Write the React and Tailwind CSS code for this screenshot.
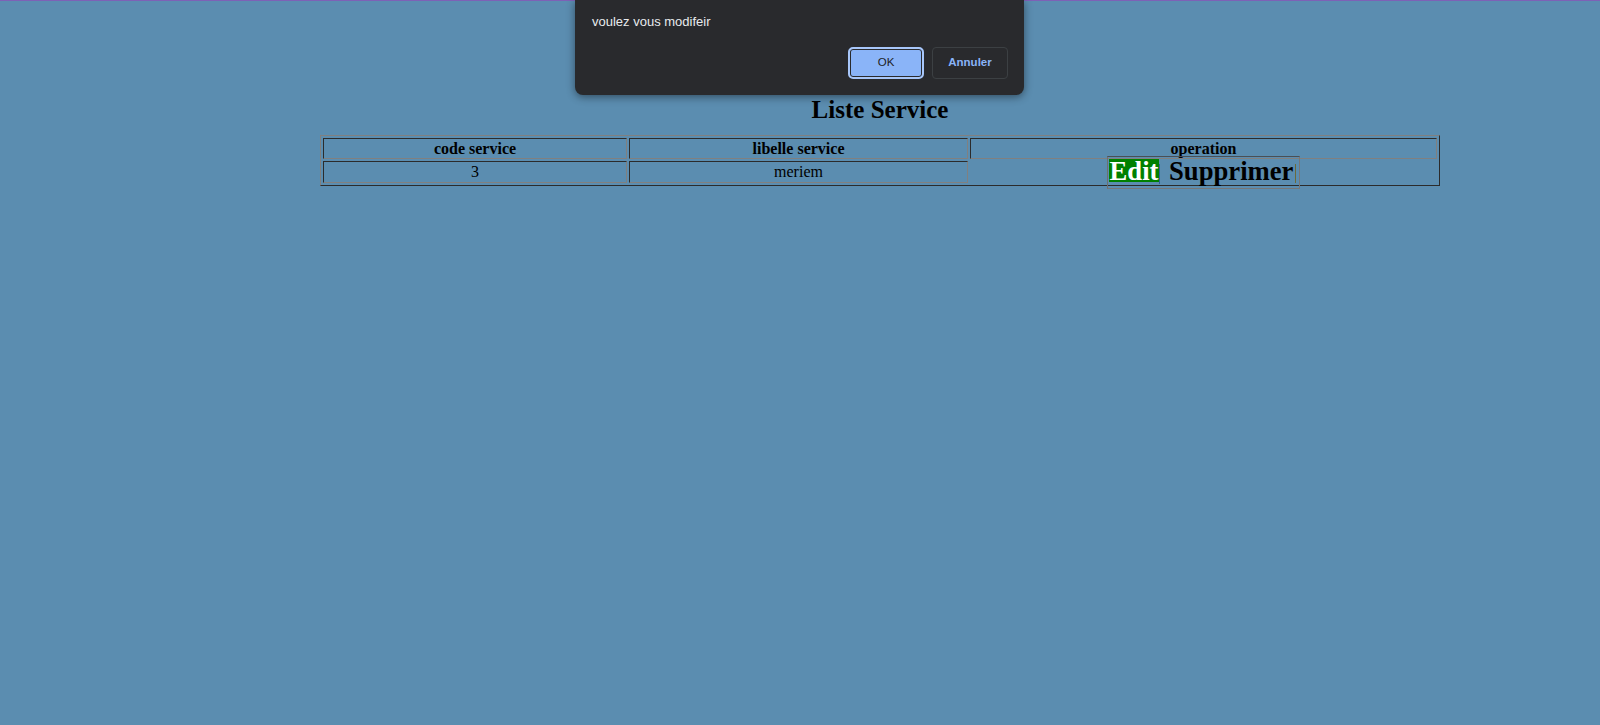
import React from 'react';

const headCell =
  "flex items-center justify-center border border-t-[#2b2b2b] border-l-[#2b2b2b] border-r-[#808080] border-b-[#808080] font-bold text-[16px] leading-none";
const dataCell =
  "flex items-center justify-center border border-t-[#2b2b2b] border-l-[#2b2b2b] border-r-[#808080] border-b-[#808080] text-[16px] leading-none";

const ConfirmDialog = () => (
  <div className="absolute left-[575px] top-0 w-[449px] h-[95px] bg-[#292a2d] rounded-b-[8px] shadow-[0_2px_8px_rgba(0,0,0,0.45)] font-['Liberation_Sans',Arial,sans-serif]">
    <p className="pl-[17px] pt-[14px] text-[13px] leading-[15px] text-[#e8eaed]">voulez vous modifeir</p>
    <div className="flex justify-end gap-[8px] pr-[16px] mt-[18px]">
      <button className="w-[76px] h-[32px] rounded-[5px] border-2 border-[#a8c7fa] bg-[#8ab4f8] shadow-[inset_0_0_0_1px_#292a2d] text-[11.5px] text-[#202124]">
        OK
      </button>
      <button className="w-[76px] h-[32px] rounded-[4px] border border-[#3c4043] bg-transparent text-[11.5px] font-bold text-[#8ab4f8]">
        Annuler
      </button>
    </div>
  </div>
);

const App = () => {
  return (
    <div className="relative min-h-screen bg-[#5b8db0] text-black font-['Liberation_Serif','Times_New_Roman',serif]">
      <div className="h-px bg-[#7d61b6]" />
      <div className="ml-[20%] w-[70%] pt-[95px]">
        <h2 className="text-center text-[25px] leading-[28px] font-bold">Liste Service</h2>
        <div className="mt-[11px] border border-t-[#808080] border-l-[#808080] border-r-[#2b2b2b] border-b-[#2b2b2b] p-[2px] grid grid-cols-[304px_339px_1fr] grid-rows-[21px_22px] gap-[2px]">
          <div className={headCell}>code service</div>
          <div className={headCell}>libelle service</div>
          <div className={headCell}>operation</div>
          <div className={dataCell}>3</div>
          <div className={dataCell}>meriem</div>
          <div className="flex items-center justify-center">
            <div className="mt-[1px] flex items-start w-[193px] h-[33px] shrink-0 border border-t-[#4a4f55] border-l-[#6f6f6f] border-r-[#777777] border-b-[#777777]">
              <span className="ml-[1px] mt-[2px] w-[50px] h-[23px] flex justify-center bg-[#008000] text-white font-bold text-[26.67px] leading-[24px]">
                Edit
              </span>
              <span className="mt-[7px] w-px h-[20px] bg-[#2f5f99]" />
              <span className="ml-[9px] mt-[2px] h-[23px] font-bold text-[26.67px] leading-[24px]">Supprimer</span>
              <span className="ml-[2px] mt-[7px] w-px h-[19px] bg-[#6b6a3a]" />
            </div>
          </div>
        </div>
      </div>
      <ConfirmDialog />
    </div>
  );
};

export default App;
